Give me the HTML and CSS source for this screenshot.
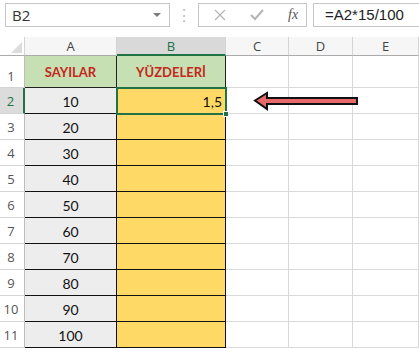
FILE: index.html
```html
<!DOCTYPE html>
<html lang="tr">
<head>
  <meta charset="UTF-8" />
  <meta name="viewport" content="width=device-width, initial-scale=1.0"/>
  <title>Yüzde Hesaplama</title>
  <link rel="stylesheet" href="styles.css">
</head>
<body>
  <div class="formula-bar">
    <div class="name-box">
      <span>B2</span>
      <span class="drop"></span>
    </div>
    <div class="dots">⋮</div>
    <div class="fx-buttons">
      <svg class="fx-icon" width="12" height="12" viewBox="0 0 12 12"><path d="M1 1 L11 11 M11 1 L1 11" stroke="#b5b5b5" stroke-width="1.3"/></svg>
      <svg class="fx-icon" width="14" height="12" viewBox="0 0 14 12"><path d="M1 6 L5 10 L13 1" stroke="#b5b5b5" stroke-width="2" fill="none"/></svg>
      <span class="fx">fx</span>
    </div>
    <div class="formula">=A2*15/100</div>
  </div>

  <div class="sheet">
    <div class="corner"><span class="tri"></span></div>
    <div class="col-head">A</div>
    <div class="col-head active">B</div>
    <div class="col-head">C</div>
    <div class="col-head">D</div>
    <div class="col-head">E</div>

    <div class="row-head first">1</div>
    <div class="cell title">SAYILAR</div>
    <div class="cell title">YÜZDELERİ</div>
    <div class="cell"></div>
    <div class="cell"></div>
    <div class="cell"></div>

    <div class="row-head active">2</div>
    <div class="cell num">10</div>
    <div class="cell pct selected">1,5<span class="handle"></span></div>
    <div class="cell"></div>
    <div class="cell"></div>
    <div class="cell"></div>

    <div class="row-head">3</div>
    <div class="cell num">20</div>
    <div class="cell pct"></div>
    <div class="cell"></div><div class="cell"></div><div class="cell"></div>

    <div class="row-head">4</div>
    <div class="cell num">30</div>
    <div class="cell pct"></div>
    <div class="cell"></div><div class="cell"></div><div class="cell"></div>

    <div class="row-head">5</div>
    <div class="cell num">40</div>
    <div class="cell pct"></div>
    <div class="cell"></div><div class="cell"></div><div class="cell"></div>

    <div class="row-head">6</div>
    <div class="cell num">50</div>
    <div class="cell pct"></div>
    <div class="cell"></div><div class="cell"></div><div class="cell"></div>

    <div class="row-head">7</div>
    <div class="cell num">60</div>
    <div class="cell pct"></div>
    <div class="cell"></div><div class="cell"></div><div class="cell"></div>

    <div class="row-head">8</div>
    <div class="cell num">70</div>
    <div class="cell pct"></div>
    <div class="cell"></div><div class="cell"></div><div class="cell"></div>

    <div class="row-head">9</div>
    <div class="cell num">80</div>
    <div class="cell pct"></div>
    <div class="cell"></div><div class="cell"></div><div class="cell"></div>

    <div class="row-head">10</div>
    <div class="cell num">90</div>
    <div class="cell pct"></div>
    <div class="cell"></div><div class="cell"></div><div class="cell"></div>

    <div class="row-head">11</div>
    <div class="cell num">100</div>
    <div class="cell pct"></div>
    <div class="cell"></div><div class="cell"></div><div class="cell"></div>

    <svg class="arrow" width="112" height="26" viewBox="0 0 112 26">
      <polygon points="5,12.5 17,5 17,10 107,10 107,16 17,16 17,21" fill="#e8696b" stroke="#111" stroke-width="2" stroke-linejoin="miter"/>
    </svg>
  </div>
</body>
</html>
```

FILE: styles.css
```css
* {
  box-sizing: border-box;
}
body {
  margin: 0;
  background: #fff;
  font-family: "Open Sans", "Noto Sans", sans-serif;
  width: 419px;
  height: 352px;
  overflow: hidden;
}
.formula-bar {
  display: flex;
  height: 37px;
  padding-top: 3px;
}
.name-box {
  margin-left: 5px;
  width: 165px;
  height: 24px;
  border: 1px solid #c6c6c6;
  display: flex;
  align-items: center;
  justify-content: space-between;
  padding: 0 6px 0 6px;
  font-size: 15px;
  color: #333;
}
.drop {
  width: 0;
  height: 0;
  border-left: 4px solid transparent;
  border-right: 4px solid transparent;
  border-top: 4px solid #7a7a7a;
  margin-right: 2px;
}
.dots {
  width: 28px;
  text-align: center;
  color: #c0c0c0;
  font-size: 16px;
  line-height: 24px;
}
.fx-buttons {
  width: 109px;
  height: 24px;
  border: 1px solid #c6c6c6;
  display: flex;
  align-items: center;
  padding-left: 15px;
  gap: 24px;
}
.fx {
  font-family: "Liberation Serif", serif;
  font-style: italic;
  font-size: 14px;
  color: #555;
}
.formula {
  margin-left: 6px;
  flex: 1;
  height: 24px;
  border: 1px solid #c6c6c6;
  border-right: none;
  padding-left: 11px;
  font-family: "Liberation Sans", Arial, sans-serif;
  font-size: 15px;
  line-height: 22px;
  color: #222;
}
.sheet {
  position: relative;
  display: grid;
  grid-template-columns: 25px 92px 109px 63px 64px 66px;
  grid-template-rows: 19px 32px repeat(10, 26px);
}
.corner {
  position: relative;
  border-right: 1px solid #d4d4d4;
  border-bottom: 1px solid #ababab;
}
.tri {
  position: absolute;
  right: 2px;
  bottom: 2px;
  width: 0;
  height: 0;
  border-left: 11px solid transparent;
  border-bottom: 11px solid #dcdcdc;
}
.col-head {
  background: #f6f6f6;
  border-right: 1px solid #d4d4d4;
  border-bottom: 1px solid #ababab;
  display: flex;
  align-items: center;
  justify-content: center;
  font-size: 13px;
  color: #444;
}
.col-head.active {
  background: #d9d9d9;
  color: #217346;
  border-bottom: 2px solid #217346;
}
.row-head {
  border-right: 1px solid #bdbdbd;
  border-bottom: 1px solid #d4d4d4;
  display: flex;
  align-items: center;
  justify-content: center;
  font-size: 13px;
  color: #555;
  padding-right: 2px;
}
.row-head.first {
  align-items: flex-end;
  padding-bottom: 2px;
}
.row-head.active {
  background: #dcdcdc;
  color: #217346;
  border-right: 2px solid #217346;
}
.cell {
  border-right: 1px solid #d9d9d9;
  border-bottom: 1px solid #d9d9d9;
  display: flex;
  align-items: center;
  justify-content: center;
  font-family: "Lato", "Open Sans", sans-serif;
  font-size: 14px;
  color: #111;
  position: relative;
}
.cell.title {
  background: #c6e0b4;
  border-right-color: #222;
  border-bottom-color: #222;
  color: #c4281c;
  font-weight: bold;
  font-size: 13px;
}
.cell.num {
  background: #ededed;
  border-right-color: #111;
  border-bottom-color: #111;
  padding-top: 2px;
}
.cell.pct {
  background: #ffd966;
  border-right-color: #111;
  border-bottom-color: #111;
}
.cell.selected {
  justify-content: flex-end;
  padding-right: 3px;
  padding-top: 2px;
  outline: 2px solid #217346;
  outline-offset: -1px;
  z-index: 1;
}
.handle {
  position: absolute;
  right: -4px;
  bottom: -4px;
  width: 6px;
  height: 6px;
  background: #217346;
  border: 1px solid #fff;
}
.arrow {
  position: absolute;
  left: 250px;
  top: 51px;
}
```
